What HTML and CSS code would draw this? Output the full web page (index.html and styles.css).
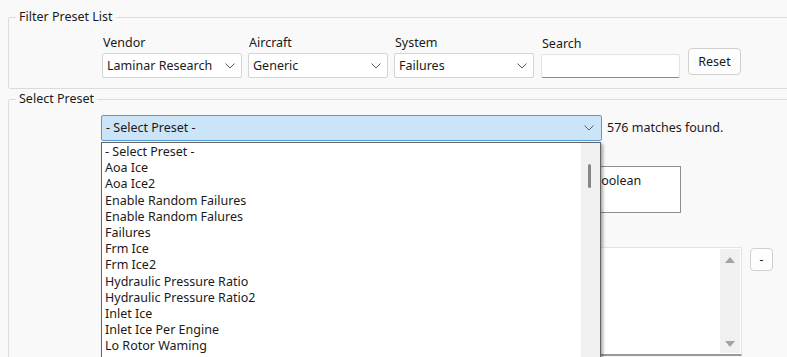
FILE: index.html
```html
<!DOCTYPE html>
<html lang="en">

<head>
    <meta charset="UTF-8">
    <meta name="viewport" content="width=device-width, initial-scale=1.0">
    <title>Preset Selector</title>
    <link rel="stylesheet" href="styles.css">
</head>

<body>

    <!-- Filtro de la lista -->
    <fieldset class="group filter-group">
        <legend>Filter Preset List</legend>
        <div class="filter-row">
            <div class="field">
                <label>Vendor</label>
                <div class="combo">
                    <span>Laminar Research</span>
                    <svg class="chevron" width="10" height="6" viewBox="0 0 10 6"><polyline points="0.5,0.5 5,5 9.5,0.5" /></svg>
                </div>
            </div>
            <div class="field">
                <label>Aircraft</label>
                <div class="combo">
                    <span>Generic</span>
                    <svg class="chevron" width="10" height="6" viewBox="0 0 10 6"><polyline points="0.5,0.5 5,5 9.5,0.5" /></svg>
                </div>
            </div>
            <div class="field">
                <label>System</label>
                <div class="combo">
                    <span>Failures</span>
                    <svg class="chevron" width="10" height="6" viewBox="0 0 10 6"><polyline points="0.5,0.5 5,5 9.5,0.5" /></svg>
                </div>
            </div>
            <div class="field search-field">
                <label>Search</label>
                <div class="search-box"></div>
            </div>
            <button class="btn reset-btn">Reset</button>
        </div>
    </fieldset>

    <!-- Selección de preset -->
    <fieldset class="group preset-group">
        <legend>Select Preset</legend>
        <div class="preset-body">
            <div class="preset-row">
                <div class="combo combo-open">
                    <span>- Select Preset -</span>
                    <svg class="chevron" width="10" height="6" viewBox="0 0 10 6"><polyline points="0.5,0.5 5,5 9.5,0.5" /></svg>
                </div>
                <span class="matches">576 matches found.</span>
            </div>

            <div class="info-row">
                <div class="box name-box"></div>
                <div class="box type-box">Boolean</div>
            </div>

            <div class="list-row">
                <div class="list-box">
                    <div class="list-scroll">
                        <span class="arrow-up"></span>
                        <span class="arrow-down"></span>
                    </div>
                </div>
                <button class="btn small-btn">-</button>
            </div>

            <!-- Lista desplegable abierta -->
            <div class="dropdown">
                <ul class="dropdown-items">
                    <li>- Select Preset -</li>
                    <li>Aoa Ice</li>
                    <li>Aoa Ice2</li>
                    <li>Enable Random Failures</li>
                    <li>Enable Random Falures</li>
                    <li>Failures</li>
                    <li>Frm Ice</li>
                    <li>Frm Ice2</li>
                    <li>Hydraulic Pressure Ratio</li>
                    <li>Hydraulic Pressure Ratio2</li>
                    <li>Inlet Ice</li>
                    <li>Inlet Ice Per Engine</li>
                    <li>Lo Rotor Waming</li>
                    <li>Manu Trim Sensor Ratio Up</li>
                </ul>
                <div class="dropdown-scroll">
                    <span class="thumb"></span>
                </div>
            </div>
        </div>
    </fieldset>

</body>

</html>
```

FILE: styles.css
```css
/* Estilos generales */
body {
    font-family: "Noto Sans", "Liberation Sans", sans-serif;
    font-size: 12.5px;
    line-height: 16px;
    background-color: #f9f9f9;
    color: #1a1a1a;
    margin: 0;
    overflow: hidden;
}

/* Cajas de grupo */
.group {
    border: 1px solid #dcdcdc;
    border-radius: 2px;
    margin: 9px -30px 0 8px;
    padding: 0 0 0 7px;
}

.group legend {
    padding: 0 3px;
    color: #1a1a1a;
}

.filter-group {
    padding-bottom: 10px;
}

.preset-group {
    margin-top: 2px;
    height: 400px;
}

/* Fila de filtros */
.filter-row {
    display: flex;
    align-items: flex-end;
    margin: 10px 0 0 86px;
}

.field {
    display: flex;
    flex-direction: column;
    width: 140px;
    margin-right: 6px;
}

.field label {
    padding-left: 1px;
    margin-bottom: 2px;
}

.search-field {
    width: 139px;
    margin-left: 1px;
    margin-right: 8px;
}

.combo {
    display: flex;
    align-items: center;
    justify-content: space-between;
    height: 25px;
    box-sizing: border-box;
    padding: 0 6px 0 4px;
    background-color: #ffffff;
    border: 1px solid #d4d4d4;
    border-radius: 2px;
}

.chevron {
    fill: none;
    stroke: #5f5f5f;
    stroke-width: 1;
}

.search-box {
    height: 24px;
    box-sizing: border-box;
    background-color: #ffffff;
    border: 1px solid #e2e2e2;
    border-bottom: 1px solid #8a8a8a;
    border-radius: 2px;
}

/* Botones */
.btn {
    font-family: inherit;
    font-size: 12.5px;
    color: #1a1a1a;
    background-color: #fdfdfd;
    border: 1px solid #d0d0d0;
    border-radius: 4px;
    padding: 0;
}

.reset-btn {
    width: 53px;
    height: 27px;
    margin-bottom: 3px;
}

.small-btn {
    width: 23px;
    height: 23px;
    font-size: 12px;
    line-height: 12px;
    margin-top: 1px;
}

/* Zona de preset */
.preset-body {
    position: relative;
    margin: 8px 0 0 85px;
}

.preset-row {
    display: flex;
    align-items: center;
}

.combo-open {
    width: 501px;
    height: 26px;
    background-color: #cce4f7;
    border-color: #5a9bd5;
    padding-right: 7px;
}

.matches {
    margin-left: 5px;
}

.info-row {
    display: flex;
    gap: 4px;
    margin-top: 25px;
}

.box {
    height: 47px;
    box-sizing: border-box;
    background-color: #ffffff;
    border: 1px solid #8e8e8e;
    padding: 6px 3px;
}

.name-box {
    width: 484px;
}

.type-box {
    width: 92px;
}

.list-row {
    display: flex;
    gap: 8px;
    margin-top: 34px;
}

.list-box {
    display: flex;
    justify-content: flex-end;
    width: 641px;
    height: 109px;
    box-sizing: border-box;
    background-color: #ffffff;
    border: 1px solid #e3e3e3;
    border-bottom: 2px solid #9a9a9a;
    padding: 1px;
}

.list-scroll {
    display: flex;
    flex-direction: column;
    justify-content: space-between;
    align-items: center;
    width: 20px;
    background-color: #f0f0f0;
    padding: 8px 0 6px;
}

.arrow-up {
    border-left: 5px solid transparent;
    border-right: 5px solid transparent;
    border-bottom: 6px solid #a3a3a3;
}

.arrow-down {
    border-left: 5px solid transparent;
    border-right: 5px solid transparent;
    border-top: 6px solid #a3a3a3;
}

/* Lista desplegable */
.dropdown {
    position: absolute;
    top: 27px;
    left: 0;
    width: 500px;
    height: 240px;
    box-sizing: border-box;
    display: flex;
    background-color: #ffffff;
    border: 1px solid #646464;
    box-shadow: 2px 2px 3px rgba(0, 0, 0, 0.35);
}

.dropdown-items {
    flex: 1;
    list-style: none;
    margin: 0;
    padding: 1px 0 0 3px;
}

.dropdown-items li {
    line-height: 16.2px;
    white-space: nowrap;
}

.dropdown-scroll {
    width: 19px;
    background-color: #f0f0f0;
    position: relative;
}

.dropdown-scroll .thumb {
    position: absolute;
    top: 21px;
    left: 7px;
    width: 3px;
    height: 24px;
    border-radius: 2px;
    background-color: #858585;
}
```
